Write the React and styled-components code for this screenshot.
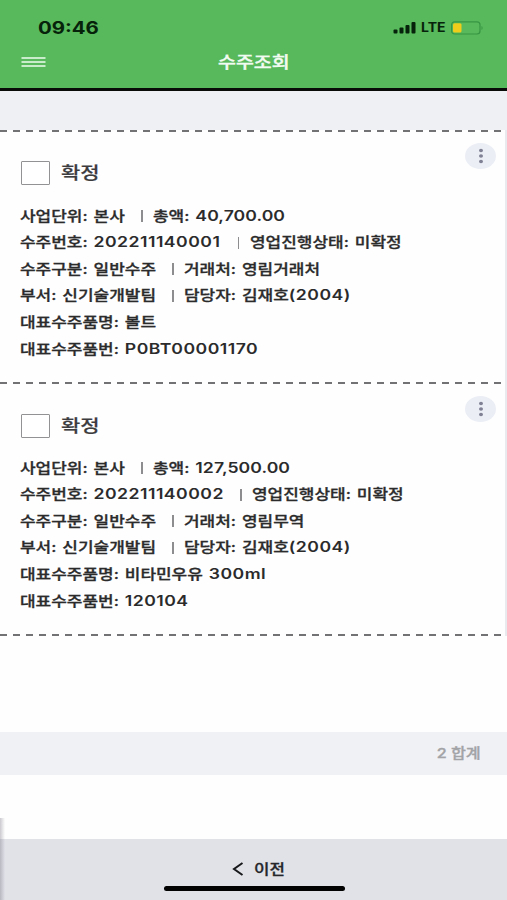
import React from "react";
import styled, { createGlobalStyle } from "styled-components";

const GlobalStyle = createGlobalStyle`
  * { box-sizing: border-box; }
  body { margin: 0; background: #fefefe; }
`;

const Screen = styled.div`
  width: 507px;
  height: 900px;
  position: relative;
  display: flex;
  flex-direction: column;
  overflow: hidden;
  background: #fefefe;
  color: #2b2b2c;
  font-family: Inter, "Noto Sans CJK KR", sans-serif;
`;

const Header = styled.header`
  height: 91px;
  flex: none;
  background: #57b95b;
  border-bottom: 3px solid #080b08;
`;

const StatusBar = styled.div`
  height: 44px;
  padding: 11px 23px 0 38px;
  display: flex;
  justify-content: space-between;
  align-items: center;
`;

const Stretch = styled.span`
  display: block;
  white-space: pre;
  transform: scaleX(${(p) => p.$x || 1.2});
  transform-origin: ${(p) => p.$origin || "left"} center;
`;

const Clock = styled(Stretch)`
  font-size: 17px;
  font-weight: 700;
  line-height: 20px;
  color: #06220a;
`;

const StatusIcons = styled.div`
  display: flex;
  align-items: center;
`;

const Carrier = styled(Stretch)`
  width: 29px;
  margin-left: 5px;
  font-size: 12.5px;
  font-weight: 700;
  line-height: 20px;
  color: #06220a;
`;

const TitleBar = styled.div`
  height: 36px;
  display: grid;
  grid-template-columns: 60px 1fr 60px;
  align-items: center;
  padding-left: 21px;
  padding-right: 21px;
`;

const Title = styled(Stretch)`
  justify-self: center;
  margin-top: -1px;
  font-size: 16.2px;
  font-weight: 500;
  -webkit-text-stroke: 0.4px currentColor;
  line-height: 24px;
  color: #f2fbf2;
`;

const Band = styled.div`
  height: 39px;
  flex: none;
  background: #eff0f4;
`;

const List = styled.main`
  height: 506px;
  flex: none;
  border-right: 2px solid #e9eaee;
`;

const Dash = styled.div`
  height: 2px;
  width: 502px;
  background: repeating-linear-gradient(90deg, #727274 0 7px, transparent 7px 13px);
`;

const Card = styled.section`
  height: 250px;
  padding: 11px 9px 0 20px;
`;

const CardHead = styled.div`
  display: flex;
  height: 57px;
  padding-top: ${(p) => p.$drop}px;
`;

const Checkbox = styled.button`
  width: 29px;
  height: 24px;
  margin: 18px 0 0 1px;
  padding: 0;
  border: 1px solid #929294;
  border-radius: 1px;
  background: #fff;
`;

const Status = styled(Stretch)`
  margin: 16px 0 0 11px;
  font-size: 17.5px;
  line-height: 28px;
  height: 28px;
  font-weight: 500;
  -webkit-text-stroke: 0.2px currentColor;
  color: #3c3c3e;
`;

const MoreButton = styled.button`
  width: 31px;
  height: 26px;
  margin-left: auto;
  padding: 0;
  border: 0;
  border-radius: 50%;
  background: #eceef6;
  display: grid;
  place-items: center;
`;

const Row = styled.div`
  display: flex;
  height: 26.67px;
  align-items: center;
  font-size: 14.15px;
  font-weight: 500;
  word-spacing: 1.2px;
  -webkit-text-stroke: 0.3px currentColor;
`;

const Field = styled.div`
  width: ${(p) => p.$w}px;
  flex: none;
`;

const Value = styled.span`
  font-size: 14.7px;
  line-height: 1;
  font-weight: 600;
  letter-spacing: ${(p) => p.$spacing}px;
  -webkit-text-stroke: 0;
`;

const Divider = styled.i`
  width: 1.5px;
  height: 12px;
  margin: 3px 10.5px 0 0;
  background: #8d8d90;
`;

const Spacer = styled.div`
  height: ${(p) => p.$h}px;
  flex: none;
`;

const Total = styled.div`
  height: 43px;
  flex: none;
  background: #f0f1f5;
  display: flex;
  justify-content: flex-end;
  align-items: center;
  padding: 0 26px 3px 0;
  font-size: 13.5px;
  font-weight: 500;
  -webkit-text-stroke: 0.3px currentColor;
  color: #a2a3a6;
`;

const Footer = styled.footer`
  flex: 1;
  display: flex;
  flex-direction: column;
  align-items: center;
  background: #e0e2e8;
`;

const Back = styled.button`
  height: 47px;
  padding: 13px 0 0;
  margin-left: 9px;
  border: 0;
  background: none;
  display: flex;
  align-items: center;
  gap: 10px;
  font-family: inherit;
  font-size: 14px;
  font-weight: 500;
  -webkit-text-stroke: 0.3px currentColor;
  color: #25262a;
`;

const BackLabel = styled(Stretch)`
  width: 31px;
  text-align: left;
  margin-top: -2px;
`;

const HomeBar = styled.div`
  width: 181px;
  height: 5px;
  margin-left: 1px;
  border-radius: 3px;
  background: #020203;
`;

const EdgeShadow = styled.div`
  position: absolute;
  left: 0;
  top: 818px;
  bottom: 0;
  width: 5px;
  background: linear-gradient(90deg, rgba(110, 105, 120, 0.35), transparent);
`;

const orders = [
  [
    ["사업단위: 본사", 121, "총액: 40,700.00"],
    ["수주번호: 202211140001", 217.5, "영업진행상태: 미확정"],
    ["수주구분: 일반수주", 152, "거래처: 영림거래처"],
    ["부서: 신기술개발팀", 152, "담당자: 김재호(2004)"],
    ["대표수주품명: 볼트"],
    ["대표수주품번: P0BT00001170"],
  ],
  [
    ["사업단위: 본사", 121, "총액: 127,500.00"],
    ["수주번호: 202211140002", 220, "영업진행상태: 미확정"],
    ["수주구분: 일반수주", 152, "거래처: 영림무역"],
    ["부서: 신기술개발팀", 152, "담당자: 김재호(2004)"],
    ["대표수주품명: 비타민우유 300ml"],
    ["대표수주품번: 120104"],
  ],
];

function FieldText({ children }) {
  return (
    <Stretch>
      {children.split(/([A-Za-z0-9(),.]+)/).map((part, i) =>
        i % 2 ? <Value key={i} $spacing={part.includes(",") ? 0.05 : 0.4}>{part}</Value> : part
      )}
    </Stretch>
  );
}

function Order({ rows, drop = 0 }) {
  return (
    <Card>
      <CardHead $drop={drop}>
        <Checkbox aria-label="선택" />
        <Status>확정</Status>
        <MoreButton aria-label="메뉴">
          <svg width="6" height="16" viewBox="0 0 6 16" fill="#808194">
            <ellipse cx="3" cy="2.5" rx="2" ry="1.7" />
            <ellipse cx="3" cy="8" rx="2" ry="1.7" />
            <ellipse cx="3" cy="13.5" rx="2" ry="1.7" />
          </svg>
        </MoreButton>
      </CardHead>
      <Spacer $h={1.2} />
      {rows.map(([first, width, second]) => (
        <Row key={first}>
          <Field $w={width || 400}><FieldText>{first}</FieldText></Field>
          {second && <Divider />}
          {second && <FieldText>{second}</FieldText>}
        </Row>
      ))}
    </Card>
  );
}

export default function App() {
  return (
    <>
      <GlobalStyle />
      <Screen>
        <Header>
          <StatusBar>
            <Clock>09:46</Clock>
            <StatusIcons>
              <svg width="23" height="13" viewBox="0 0 23 13" fill="#06220a">
                <rect x="0.5" y="8.5" width="4" height="4" rx="1" />
                <rect x="6.5" y="6.5" width="4" height="6" rx="1" />
                <rect x="12.5" y="4" width="4" height="8.5" rx="1" />
                <rect x="18.5" y="1" width="4" height="11.5" rx="1" />
              </svg>
              <Carrier $x={1.12}>LTE</Carrier>
              <svg width="34" height="14" viewBox="0 0 34 14">
                <rect x="1.6" y="0.8" width="28.4" height="12.2" rx="3" fill="none" stroke="#379544" strokeWidth="1.2" />
                <rect x="3" y="2.3" width="8.5" height="9.2" rx="1.5" fill="#f0cd1b" />
                <path d="M31.5 5a2.4 2.4 0 0 1 0 4z" fill="#379544" />
              </svg>
            </StatusIcons>
          </StatusBar>
          <TitleBar>
            <svg width="25" height="12" viewBox="0 0 25 12" fill="#c9edcb">
              <rect x="0.5" y="1" width="24" height="2" />
              <rect x="0.5" y="5" width="24" height="2" />
              <rect x="0.5" y="9" width="24" height="2" />
            </svg>
            <Title $origin="center">수주조회</Title>
          </TitleBar>
        </Header>
        <Band />
        <List>
          <Dash />
          <Order rows={orders[0]} />
          <Dash />
          <Order rows={orders[1]} drop={1} />
          <Dash />
        </List>
        <Spacer $h={96} />
        <Total><Stretch $origin="right">2 합계</Stretch></Total>
        <Spacer $h={64} />
        <Footer>
          <Back>
            <svg width="12" height="16" viewBox="0 0 12 16" fill="none" stroke="#17181a" strokeWidth="2">
              <path d="M10.5 2 2 8l8.5 6" />
            </svg>
            <BackLabel>이전</BackLabel>
          </Back>
          <HomeBar />
        </Footer>
        <EdgeShadow />
      </Screen>
    </>
  );
}
